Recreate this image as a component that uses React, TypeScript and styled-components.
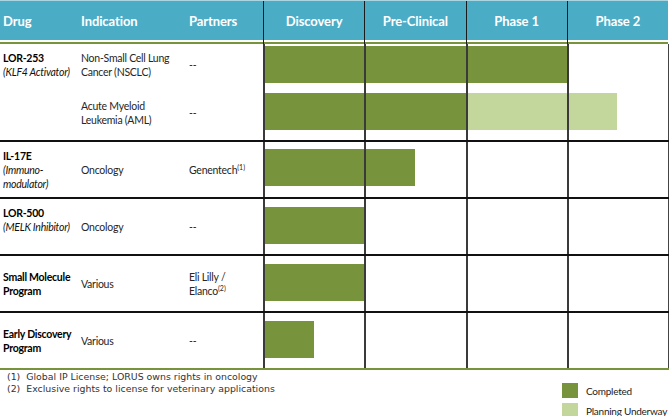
import React from 'react';
import styled, { createGlobalStyle } from 'styled-components';

const DARK_GREEN = '#77933c';
const LIGHT_GREEN = '#c3d69b';
const TEAL = '#4bacc6';

const GlobalStyle = createGlobalStyle`
  body {
    margin: 0;
    background: #fff;
    font-family: Lato, "Open Sans", sans-serif;
  }
`;

const Page = styled.div`
  width: 670px;
  height: 416px;
  overflow: hidden;
`;

const Table = styled.div`
  width: 669px;
`;

const HeaderRow = styled.div`
  display: grid;
  grid-template-columns: 78px 108px 77px repeat(4, 1fr);
  width: 668px;
  height: 39px;
  border-top: 1px solid #a9d6e0;
  background: ${TEAL};
`;

const HeaderCell = styled.div<{ $stage?: boolean }>`
  display: flex;
  align-items: center;
  justify-content: ${p => (p.$stage ? 'center' : 'flex-start')};
  padding-left: ${p => (p.$stage ? '0' : '3px')};
  border-left: ${p => (p.$stage ? '1px solid #1b1b1b' : 'none')};
  color: #fff;
  font-size: 13px;
  font-weight: 700;
  letter-spacing: -0.1px;
`;

const Divider = styled.div`
  display: grid;
  grid-template-columns: 263px repeat(4, 1fr);
  width: 668px;
  height: 4px;
  background: linear-gradient(to bottom, #fff 0 2px, ${DARK_GREEN} 2px 4px);
`;

const DividerLine = styled.div`
  border-left: 1px solid #1b1b1b;
`;

const Row = styled.div<{ $h: number; $last?: boolean }>`
  display: grid;
  grid-template-columns: 78px 108px 77px 406px;
  grid-auto-rows: ${p => p.$h}px;
  border-bottom: 2px solid ${p => (p.$last ? DARK_GREEN : '#111')};
`;

const Cell = styled.div<{ $col: number; $row: number; $pb: number }>`
  grid-column: ${p => p.$col};
  grid-row: ${p => p.$row};
  display: flex;
  flex-direction: column;
  justify-content: center;
  padding: 0 0 ${p => p.$pb}px 3px;
  font-size: 10.5px;
  letter-spacing: -0.25px;
  line-height: 14px;
  color: #262626;
  white-space: nowrap;
`;

const DrugName = styled.span`
  font-weight: 700;
  color: #000;
`;

const DrugSub = styled.span`
  font-style: italic;
  color: #111;
`;

const Sup = styled.sup`
  font-size: 7px;
  line-height: 0;
  vertical-align: 4px;
  letter-spacing: 0;
`;

const Track = styled.div<{ $row: number }>`
  grid-column: 4;
  grid-row: ${p => p.$row};
  display: grid;
  grid-template-columns: repeat(4, 1fr);
  border-right: 1px solid #444;
`;

const StageCell = styled.div<{ $col: number }>`
  grid-column: ${p => p.$col};
  grid-row: 1;
  border-left: 2px solid #3a3a3a;
  z-index: 1;
`;

const BarLane = styled.div<{ $top: number }>`
  grid-column: 1 / -1;
  grid-row: 1;
  align-self: start;
  display: flex;
  height: 37px;
  margin-top: ${p => p.$top}px;
`;

const Segment = styled.div<{ $planned?: boolean }>`
  height: 100%;
  background: ${p => (p.$planned ? LIGHT_GREEN : DARK_GREEN)};
`;

const Footer = styled.div`
  display: flex;
  justify-content: space-between;
  align-items: flex-start;
`;

const Notes = styled.div`
  padding: 1px 0 0 7px;
  font-family: "DejaVu Sans", Verdana, sans-serif;
  font-size: 9.4px;
  line-height: 12px;
  color: #333;
  white-space: pre;
`;

const Legend = styled.div`
  display: flex;
  flex-direction: column;
  gap: 5px;
  margin-top: 13px;
  width: 108px;
`;

const LegendItem = styled.div`
  display: flex;
  align-items: center;
  gap: 8px;
  font-size: 10px;
  letter-spacing: -0.25px;
  color: #222;
  white-space: nowrap;
`;

const Swatch = styled.span<{ $planned?: boolean }>`
  width: 16px;
  height: 15px;
  flex-shrink: 0;
  background: ${p => (p.$planned ? LIGHT_GREEN : DARK_GREEN)};
`;

type Item = {
  indication: string[];
  partner: React.ReactNode[];
  done: number;
  planned?: number;
};

type Drug = {
  name: string[];
  sub?: string[];
  items: Item[];
  h: number;
  top: number;
  pb: number;
  drugPb?: number;
};

const drugs: Drug[] = [
  {
    name: ['LOR-253'],
    sub: ['(KLF4 Activator)'],
    h: 48,
    top: 2,
    pb: 6,
    items: [
      { indication: ['Non-Small Cell Lung', 'Cancer (NSCLC)'], partner: ['--'], done: 3 },
      { indication: ['Acute Myeloid', 'Leukemia (AML)'], partner: ['--'], done: 2, planned: 1.5 },
    ],
  },
  {
    name: ['IL-17E'],
    sub: ['(Immuno-', 'modulator)'],
    h: 55,
    top: 7,
    pb: 0,
    items: [{ indication: ['Oncology'], partner: [<>Genentech<Sup>(1)</Sup></>], done: 1.5 }],
  },
  {
    name: ['LOR-500'],
    sub: ['(MELK Inhibitor)'],
    h: 55,
    top: 8,
    pb: 0,
    drugPb: 14,
    items: [{ indication: ['Oncology'], partner: ['--'], done: 1 }],
  },
  {
    name: ['Small Molecule', 'Program'],
    h: 55,
    top: 8,
    pb: 0,
    items: [{ indication: ['Various'], partner: ['Eli Lilly /', <>Elanco<Sup>(2)</Sup></>], done: 1 }],
  },
  {
    name: ['Early Discovery', 'Program'],
    h: 55,
    top: 8,
    pb: 0,
    items: [{ indication: ['Various'], partner: ['--'], done: 0.5 }],
  },
];

const stages = ['Discovery', 'Pre-Clinical', 'Phase 1', 'Phase 2'];

export default function App() {
  return (
    <Page>
      <GlobalStyle />
      <Table>
        <HeaderRow>
          <HeaderCell>Drug</HeaderCell>
          <HeaderCell>Indication</HeaderCell>
          <HeaderCell>Partners</HeaderCell>
          {stages.map(s => (
            <HeaderCell $stage key={s}>
              {s}
            </HeaderCell>
          ))}
        </HeaderRow>
        <Divider>
          <div />
          {stages.map(s => (
            <DividerLine key={s} />
          ))}
        </Divider>
        {drugs.map((d, di) => (
          <Row key={d.name[0]} $h={d.h} $last={di === drugs.length - 1}>
            <Cell $col={1} $row={1} $pb={d.drugPb ?? d.pb}>
              {d.name.map(n => (
                <DrugName key={n}>{n}</DrugName>
              ))}
              {d.sub?.map(s => (
                <DrugSub key={s}>{s}</DrugSub>
              ))}
            </Cell>
            {d.items.map((it, i) => (
              <React.Fragment key={i}>
                <Cell $col={2} $row={i + 1} $pb={d.pb}>
                  {it.indication.map(t => (
                    <span key={t}>{t}</span>
                  ))}
                </Cell>
                <Cell $col={3} $row={i + 1} $pb={d.pb}>
                  {it.partner.map((t, k) => (
                    <span key={k}>{t}</span>
                  ))}
                </Cell>
                <Track $row={i + 1}>
                  {stages.map((s, k) => (
                    <StageCell key={s} $col={k + 1} />
                  ))}
                  <BarLane $top={i === 1 ? d.top - 1 : d.top}>
                    <Segment style={{ width: `${(it.done / 4) * 100}%` }} />
                    {it.planned ? (
                      <Segment $planned style={{ width: `${(it.planned / 4) * 100}%` }} />
                    ) : null}
                  </BarLane>
                </Track>
              </React.Fragment>
            ))}
          </Row>
        ))}
      </Table>
      <Footer>
        <Notes>
          {'(1)  Global IP License; LORUS owns rights in oncology\n(2)  Exclusive rights to license for veterinary applications'}
        </Notes>
        <Legend>
          <LegendItem>
            <Swatch />
            Completed
          </LegendItem>
          <LegendItem>
            <Swatch $planned />
            Planning Underway
          </LegendItem>
        </Legend>
      </Footer>
    </Page>
  );
}
